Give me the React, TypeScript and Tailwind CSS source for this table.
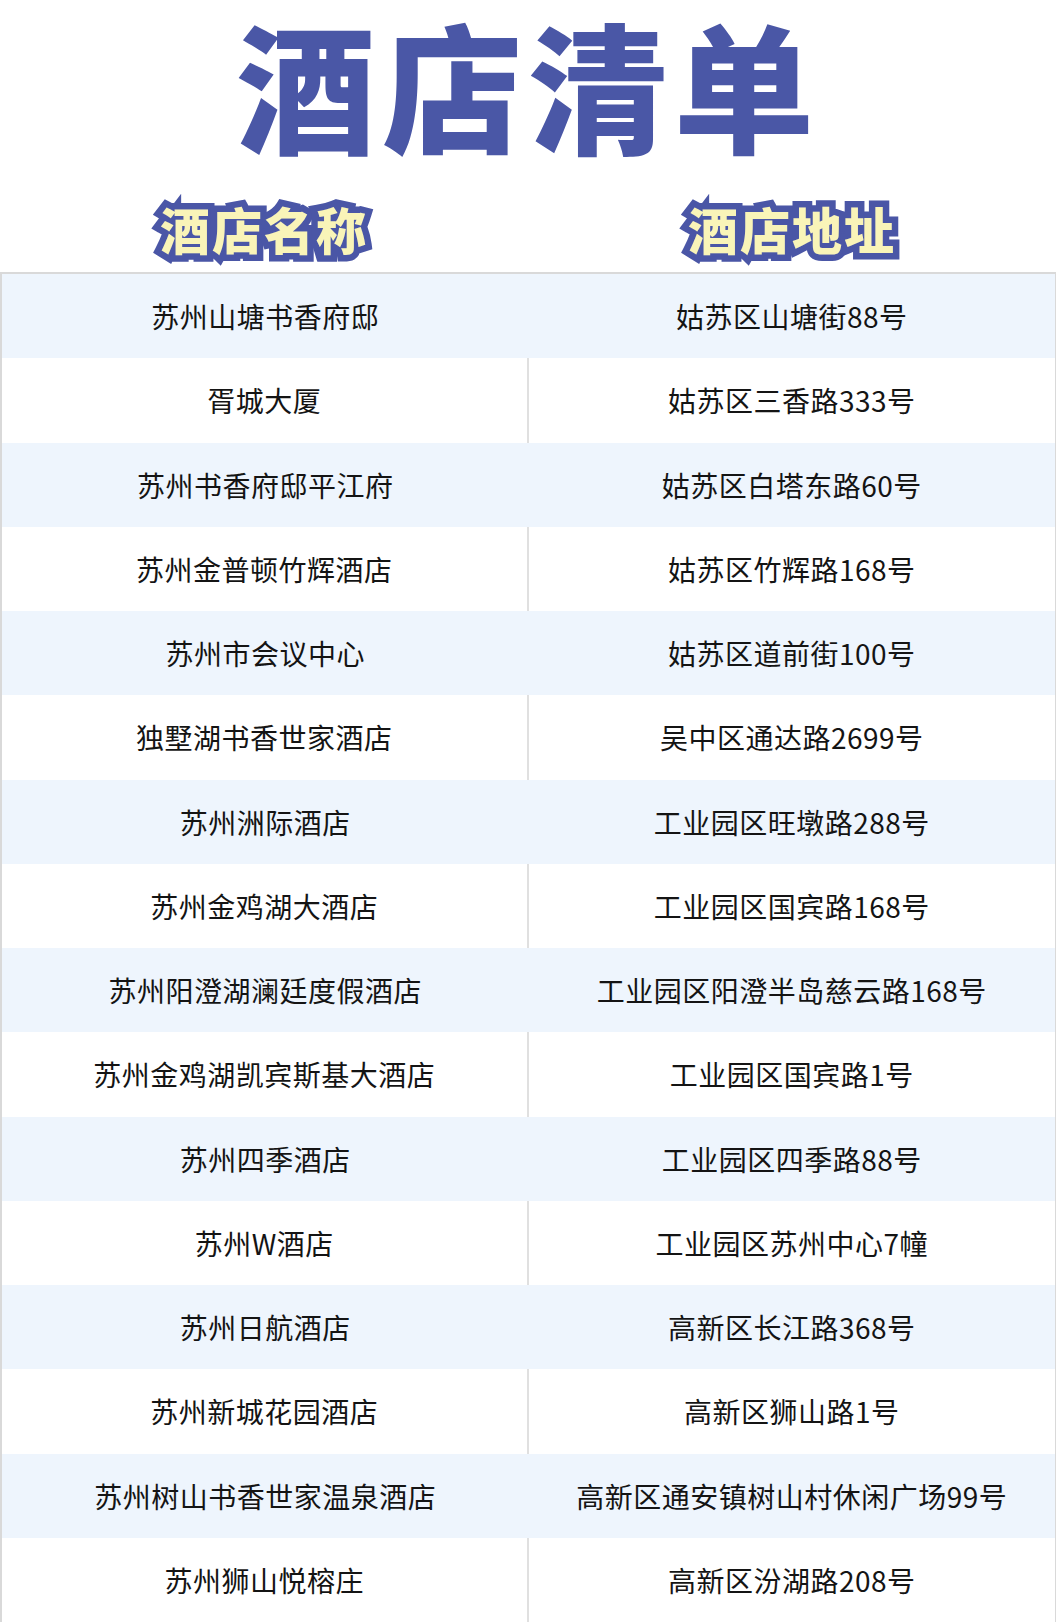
import React from 'react';

const hotels: [string, string][] = [
  ['苏州山塘书香府邸', '姑苏区山塘街88号'],
  ['胥城大厦', '姑苏区三香路333号'],
  ['苏州书香府邸平江府', '姑苏区白塔东路60号'],
  ['苏州金普顿竹辉酒店', '姑苏区竹辉路168号'],
  ['苏州市会议中心', '姑苏区道前街100号'],
  ['独墅湖书香世家酒店', '吴中区通达路2699号'],
  ['苏州洲际酒店', '工业园区旺墩路288号'],
  ['苏州金鸡湖大酒店', '工业园区国宾路168号'],
  ['苏州阳澄湖澜廷度假酒店', '工业园区阳澄半岛慈云路168号'],
  ['苏州金鸡湖凯宾斯基大酒店', '工业园区国宾路1号'],
  ['苏州四季酒店', '工业园区四季路88号'],
  ['苏州W酒店', '工业园区苏州中心7幢'],
  ['苏州日航酒店', '高新区长江路368号'],
  ['苏州新城花园酒店', '高新区狮山路1号'],
  ['苏州树山书香世家温泉酒店', '高新区通安镇树山村休闲广场99号'],
  ['苏州狮山悦榕庄', '高新区汾湖路208号'],
];

const HeaderLabel = ({ text }: { text: string }) => (
  <span className="text-[50px] font-black leading-[1.2] text-[#f9f4b8] tracking-[2px] [-webkit-text-stroke:13px_#4a56a6] [paint-order:stroke_fill] [text-shadow:2px_3px_0_#4a56a6]">
    {text}
  </span>
);

export default function App() {
  return (
    <div className="w-[1056px] h-[1622px] bg-white font-['Noto_Sans_CJK_SC','Noto_Sans',sans-serif] overflow-hidden">
      {/* Title */}
      <div className="h-[180px] flex items-start justify-center pt-[2px]">
        <h1 className="text-[140px] font-black leading-[1.15] text-[#4a57a6] tracking-[6px]">酒店清单</h1>
      </div>

      {/* Column headers */}
      <div className="h-[92px] grid grid-cols-2 items-center">
        <div className="flex justify-center pt-[4px]">
          <HeaderLabel text="酒店名称" />
        </div>
        <div className="flex justify-center pt-[4px]">
          <HeaderLabel text="酒店地址" />
        </div>
      </div>

      {/* Table */}
      <div className="border-y-2 border-l-2 border-r border-[#d9d9d9]">
        {hotels.map(([name, addr], i) => (
          <div
            key={name}
            className={`grid grid-cols-2 h-[84.25px] text-[28px] text-[#141414] tracking-[0.5px] ${i % 2 === 0 ? 'bg-[#eef5fd]' : 'bg-white'}`}
          >
            <div className={`flex items-center justify-center ${i % 2 === 0 ? '' : 'border-r-2 border-[#e0e0e0]'}`}>{name}</div>
            <div className="flex items-center justify-center">{addr}</div>
          </div>
        ))}
      </div>
    </div>
  );
}
